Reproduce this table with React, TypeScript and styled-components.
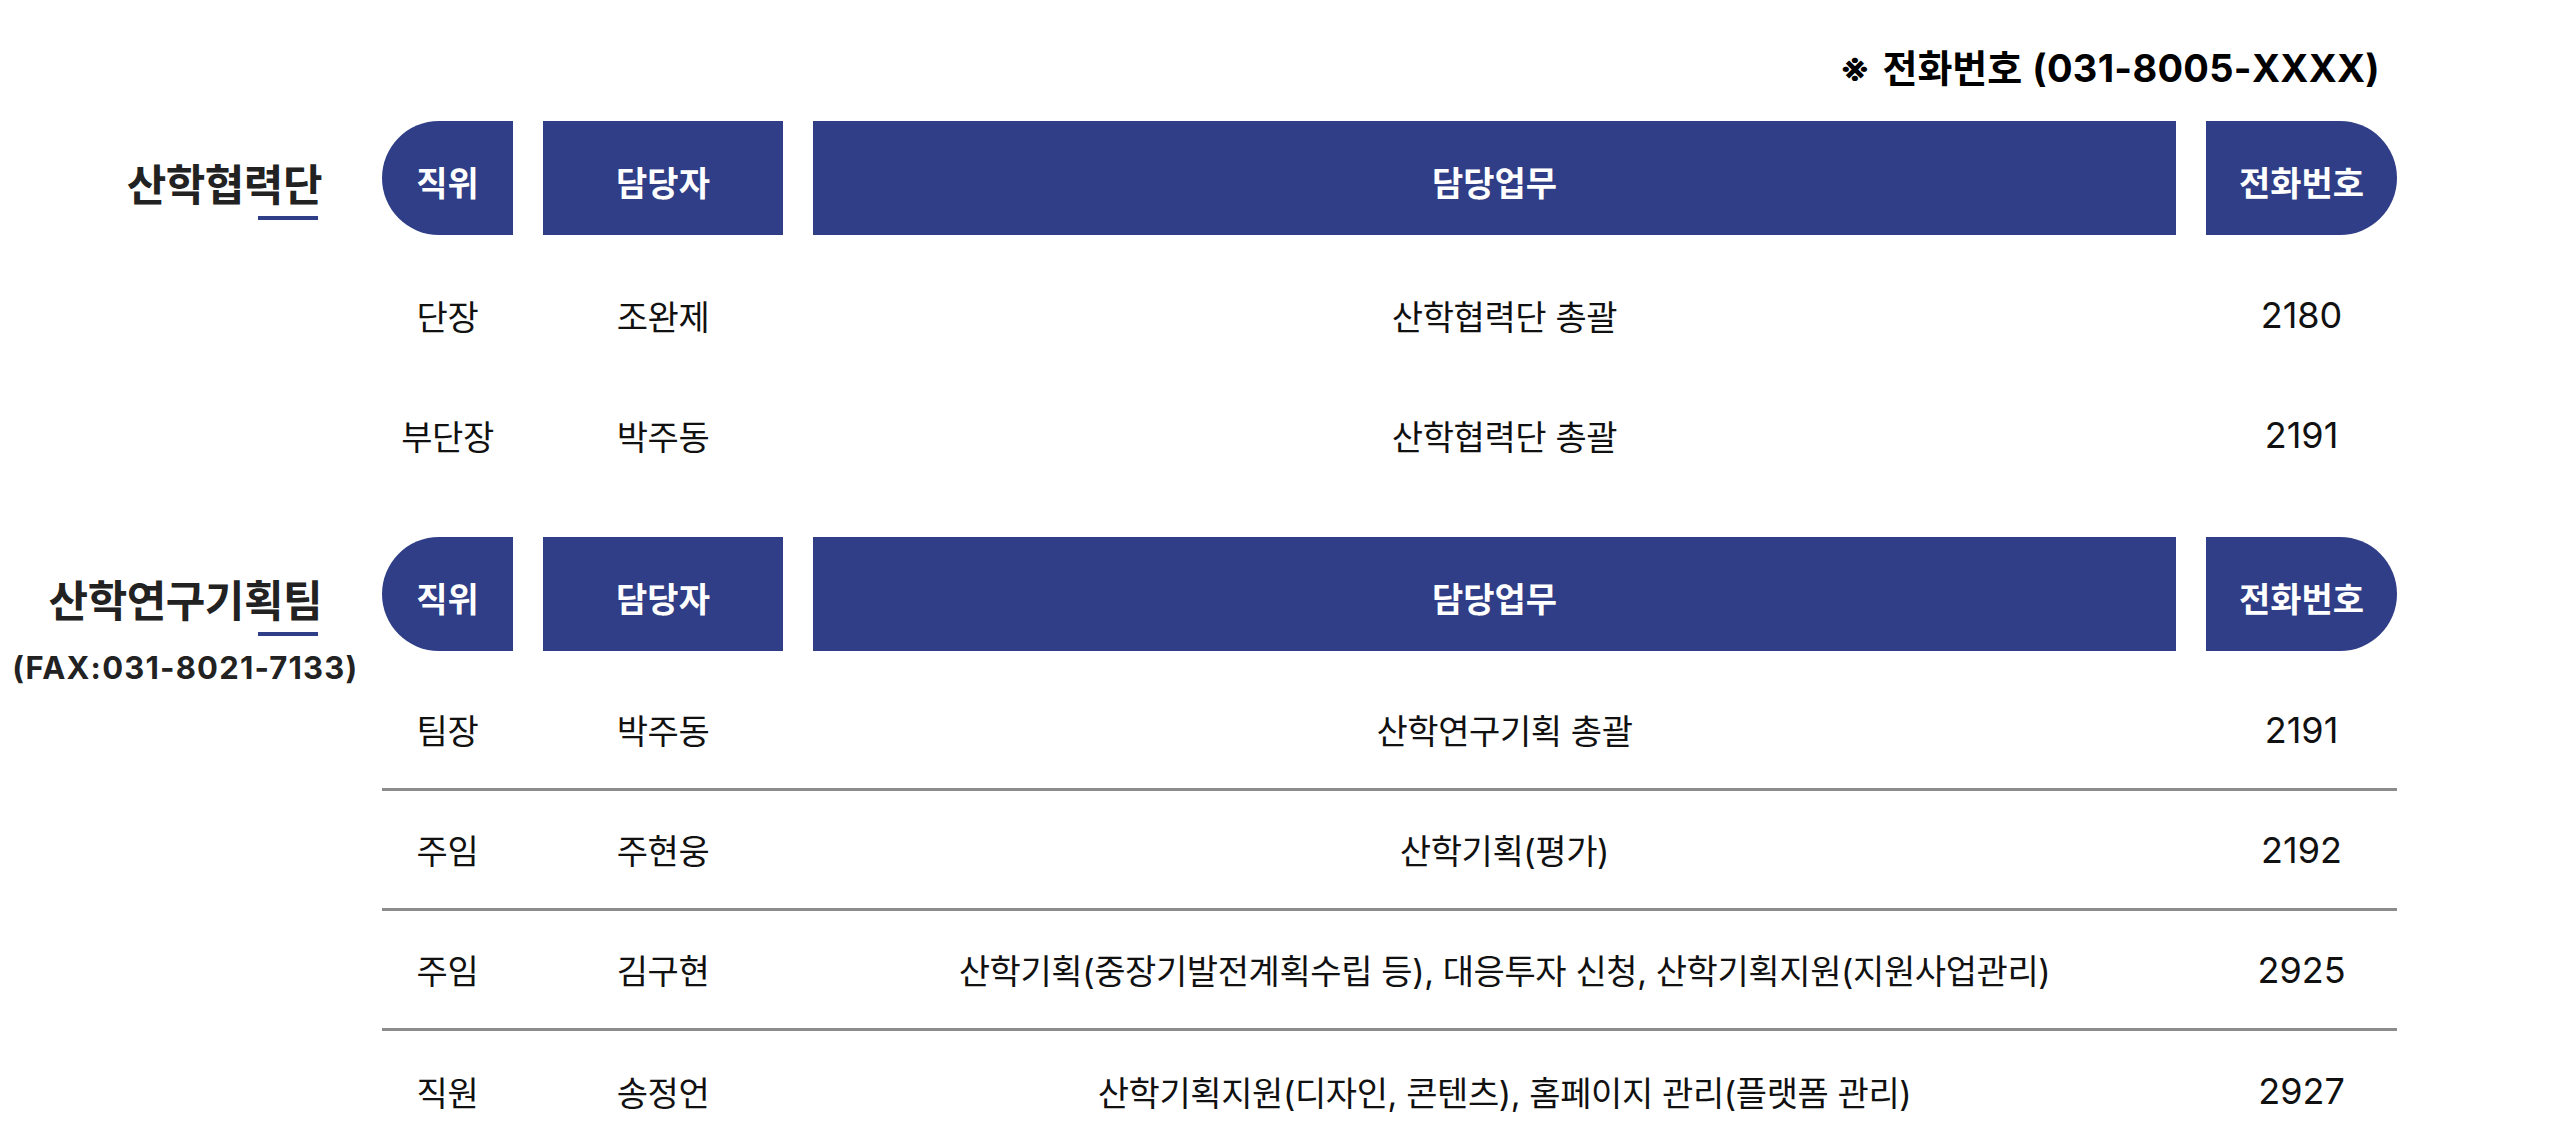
import React from "react";
import styled, { createGlobalStyle } from "styled-components";

const GlobalStyle = createGlobalStyle`
  html, body {
    margin: 0;
    padding: 0;
    background: #ffffff;
  }
  body {
    font-family: Inter, "Noto Sans CJK KR", sans-serif;
    color: #111111;
  }
`;

const NAVY = "#2f3e86";
const COLS = "131px 240px 1363px 191px";

const Page = styled.div`
  width: 2397px;
  display: flex;
  flex-direction: column;
  padding-top: 45px;
`;

const Note = styled.div`
  align-self: flex-end;
  padding-right: 17px;
  height: 46px;
  line-height: 46px;
  font-size: 38px;
  font-weight: 700;
  color: #000000;
  letter-spacing: 0.3px;
  margin-bottom: 30px;
  white-space: nowrap;
`;

const NoteMark = styled.span`
  margin-right: 12px;
`;

const NoteKo = styled.span`
  letter-spacing: 0;
  margin-right: 10px;
`;

const Section = styled.section`
  display: grid;
  grid-template-columns: 382px 2015px;
  margin-bottom: 42px;
`;

const LabelColumn = styled.div`
  display: flex;
  justify-content: flex-end;
  align-items: flex-start;
  padding-right: 60px;
  padding-top: 40px;
`;

const LabelBlock = styled.div`
  display: flex;
  flex-direction: column;
  align-items: center;
`;

const TitleWrap = styled.div`
  display: flex;
  flex-direction: column;
  align-items: flex-end;
`;

const Title = styled.h2`
  margin: 0;
  font-size: 43px;
  line-height: 48px;
  font-weight: 700;
  color: #222222;
  letter-spacing: -0.5px;
  white-space: nowrap;
`;

const Underline = styled.span`
  display: block;
  width: 60px;
  height: 4px;
  background: ${NAVY};
  margin-top: 7px;
  margin-right: 4px;
`;

const Fax = styled.div`
  margin: 14px -40px 0;
  font-size: 31px;
  line-height: 36px;
  font-weight: 700;
  color: #222222;
  letter-spacing: 1.2px;
  white-space: nowrap;
`;

const Table = styled.div`
  display: flex;
  flex-direction: column;
`;

const HeaderRow = styled.div`
  display: grid;
  grid-template-columns: ${COLS};
  column-gap: 30px;
  height: 114px;
`;

type Shape = "left" | "right" | "flat";

const HeaderCell = styled.div<{ $shape: Shape }>`
  display: flex;
  align-items: center;
  justify-content: center;
  background: ${NAVY};
  color: #ffffff;
  font-size: 34px;
  font-weight: 700;
  padding-top: 6px;
  box-sizing: border-box;
  border-radius: ${(p) =>
    p.$shape === "left" ? "57px 0 0 57px" : p.$shape === "right" ? "0 57px 57px 0" : "0"};
`;

const Body = styled.div`
  display: flex;
  flex-direction: column;
  margin-top: 20px;
`;

const Row = styled.div<{ $divided: boolean }>`
  display: grid;
  grid-template-columns: ${COLS};
  column-gap: 30px;
  height: 120px;
  box-sizing: border-box;
  border-bottom: ${(p) => (p.$divided ? "3px solid #8c8c8c" : "0")};
`;

type CellKind = "text" | "duty" | "num";

const Cell = styled.div<{ $kind?: CellKind }>`
  display: flex;
  align-items: center;
  justify-content: center;
  font-size: ${(p) => (p.$kind === "num" ? "36px" : "34px")};
  letter-spacing: ${(p) => (p.$kind === "num" ? "0" : "-0.4px")};
  padding-left: ${(p) => (p.$kind === "duty" ? "20px" : "0")};
  font-weight: 400;
  color: #111111;
  white-space: nowrap;
`;

type Person = { role: string; name: string; duty: string; tel: string };

const team1: Person[] = [
  { role: "단장", name: "조완제", duty: "산학협력단 총괄", tel: "2180" },
  { role: "부단장", name: "박주동", duty: "산학협력단 총괄", tel: "2191" },
];

const team2: Person[] = [
  { role: "팀장", name: "박주동", duty: "산학연구기획 총괄", tel: "2191" },
  { role: "주임", name: "주현웅", duty: "산학기획(평가)", tel: "2192" },
  {
    role: "주임",
    name: "김구현",
    duty: "산학기획(중장기발전계획수립 등), 대응투자 신청, 산학기획지원(지원사업관리)",
    tel: "2925",
  },
  {
    role: "직원",
    name: "송정언",
    duty: "산학기획지원(디자인, 콘텐츠), 홈페이지 관리(플랫폼 관리)",
    tel: "2927",
  },
];

const TableHeader = () => (
  <HeaderRow>
    <HeaderCell $shape="left">직위</HeaderCell>
    <HeaderCell $shape="flat">담당자</HeaderCell>
    <HeaderCell $shape="flat">담당업무</HeaderCell>
    <HeaderCell $shape="right">전화번호</HeaderCell>
  </HeaderRow>
);

const StaffTable = ({ rows, divided }: { rows: Person[]; divided: boolean }) => (
  <Table>
    <TableHeader />
    <Body>
      {rows.map((r, i) => (
        <Row key={i} $divided={divided && i < rows.length - 1}>
          <Cell $kind="text">{r.role}</Cell>
          <Cell $kind="text">{r.name}</Cell>
          <Cell $kind="duty">{r.duty}</Cell>
          <Cell $kind="num">{r.tel}</Cell>
        </Row>
      ))}
    </Body>
  </Table>
);

export default function App() {
  return (
    <>
      <GlobalStyle />
      <Page>
        <Note>
          <NoteMark>※</NoteMark>
          <NoteKo>전화번호</NoteKo>(031-8005-XXXX)
        </Note>

        <Section>
          <LabelColumn>
            <LabelBlock>
              <TitleWrap>
                <Title>산학협력단</Title>
                <Underline />
              </TitleWrap>
            </LabelBlock>
          </LabelColumn>
          <StaffTable rows={team1} divided={false} />
        </Section>

        <Section>
          <LabelColumn>
            <LabelBlock>
              <TitleWrap>
                <Title>산학연구기획팀</Title>
                <Underline />
              </TitleWrap>
              <Fax>(FAX:031-8021-7133)</Fax>
            </LabelBlock>
          </LabelColumn>
          <StaffTable rows={team2} divided={true} />
        </Section>
      </Page>
    </>
  );
}
